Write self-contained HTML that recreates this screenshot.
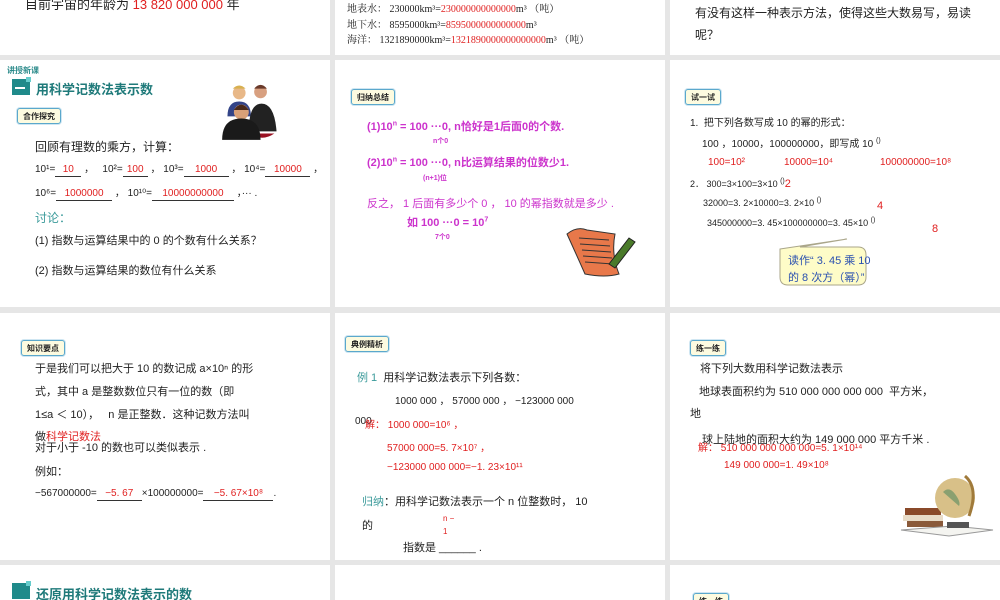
<!DOCTYPE html>
<html><head><meta charset="utf-8"><style>
*{margin:0;padding:0;box-sizing:border-box}
body{width:1000px;height:600px;background:#e6e6e6;position:relative;overflow:hidden;font-family:"Liberation Sans","Noto Sans CJK SC",sans-serif;color:#222}
.p{position:absolute;background:#fff;overflow:hidden}
.t{position:absolute;white-space:nowrap;font-size:12px}
.r{color:#e02020}
.m{color:#cc33cc;font-weight:bold}
.tl{color:#3a9a9a}
.b{position:absolute;border:1px solid #5ba8cc;border-radius:3px;background:#fdfbe0;font-size:8px;font-weight:bold;padding:1px 5px;height:16px;line-height:13px;box-shadow:0 0 0 1px #cfe6f2}
.u{display:inline-block;border-bottom:1px solid #333;text-align:center;line-height:12px}
sup{font-size:7px}
</style></head><body>
<!-- row1 -->
<div class="p" style="left:0;top:0;width:330px;height:55px">
<div class="t" style="left:25px;top:-6px;font-size:13px">目前宇宙的年龄为 <span class="r">13 820 000 000</span> 年</div></div>
<div class="p" style="left:335px;top:0;width:330px;height:55px">
<div class="t" style="left:12px;top:0;font-size:10px;font-family:'Liberation Serif','Noto Serif CJK SC',serif">地表水： 230000km³=<span class="r">230000000000000</span>m³ （吨）</div>
<div class="t" style="left:12px;top:16px;font-size:10px;font-family:'Liberation Serif','Noto Serif CJK SC',serif">地下水： 8595000km³=<span class="r">8595000000000000</span>m³</div>
<div class="t" style="left:12px;top:31px;font-size:10px;font-family:'Liberation Serif','Noto Serif CJK SC',serif">海洋： 1321890000km³=<span class="r">1321890000000000000</span>m³ （吨）</div></div>
<div class="p" style="left:670px;top:0;width:330px;height:55px">
<div class="t" style="left:25px;top:4px;font-size:12px">有没有这样一种表示方法，使得这些大数易写，易读</div>
<div class="t" style="left:25px;top:26px;font-size:12px">呢？</div></div>
<!-- row2 -->
<div class="p" style="left:0;top:60px;width:330px;height:247px">
<div class="t" style="left:7px;top:5px;font-size:8px;color:#2a8a8a;font-weight:bold">讲授新课</div>
<div style="position:absolute;left:12px;top:19px;width:18px;height:16px;background:#1f8a8a"></div>
<div style="position:absolute;left:15px;top:27px;width:10px;height:2px;background:#fff"></div>
<div style="position:absolute;left:26px;top:17px;width:5px;height:5px;background:#6cc"></div>
<div class="t" style="left:36px;top:19px;font-size:13px;font-weight:bold;color:#1f7a7a">用科学记数法表示数</div>
<div class="b" style="left:17px;top:48px">合作探究</div>
<svg style="position:absolute;left:214px;top:18px" width="76" height="64" viewBox="0 0 70 60">
<circle cx="23" cy="14" r="6" fill="#e8b888"/><path d="M17 10q6-6 12 0" fill="#d8b050"/>
<circle cx="43" cy="13" r="6" fill="#d8a080"/><path d="M37 10q6-7 12 0" fill="#6a3a2a"/>
<path d="M12 36q0-14 11-14t11 14z" fill="#334488"/>
<path d="M32 50q0-26 12-26t14 26z" fill="#222"/><path d="M34 52q10 8 22 0z" fill="#991122"/>
<circle cx="25" cy="32" r="7" fill="#d8a078"/><path d="M18 30q7-10 14 0" fill="#4a2a1a"/>
<path d="M7 58q0-20 18-20t18 20z" fill="#1a1a1a"/></svg>
<div class="t" style="left:35px;top:78px">回顾有理数的乘方，计算：</div>
<div class="t" style="left:35px;top:100px;font-size:10px">10¹=<span class="u r" style="width:26px">10</span> ，&nbsp;&nbsp; 10²=<span class="u r" style="width:25px">100</span> ， 10³=<span class="u r" style="width:45px">1000</span> ， 10⁴=<span class="u r" style="width:45px">10000</span> ，</div>
<div class="t" style="left:35px;top:124px;font-size:10px">10⁶=<span class="u r" style="width:56px">1000000</span> ， 10¹⁰=<span class="u r" style="width:82px">10000000000</span> ，··· .</div>
<div class="t tl" style="left:35px;top:149px">讨论：</div>
<div class="t" style="left:35px;top:172px;font-size:11px">(1) 指数与运算结果中的 0 的个数有什么关系？</div>
<div class="t" style="left:35px;top:202px;font-size:11px">(2) 指数与运算结果的数位有什么关系</div></div>
<div class="p" style="left:335px;top:60px;width:330px;height:247px">
<div class="b" style="left:16px;top:29px">归纳总结</div>
<div class="t m" style="left:32px;top:58px;font-size:11px">(1)10<sup>n</sup> = 100 ···0, n恰好是1后面0的个数.</div>
<div class="t m" style="left:98px;top:76px;font-size:7px">n个0</div>
<div class="t m" style="left:32px;top:94px;font-size:11px">(2)10<sup>n</sup> = 100 ···0, n比运算结果的位数少1.</div>
<div class="t m" style="left:88px;top:113px;font-size:7px">(n+1)位</div>
<div class="t" style="left:32px;top:135px;font-size:11px;color:#cc33cc">反之， 1 后面有多少个 0 ， 10 的幂指数就是多少 .</div>
<div class="t m" style="left:72px;top:154px;font-size:11px">如 100 ···0 = 10<sup>7</sup></div>
<div class="t m" style="left:100px;top:172px;font-size:7px">7个0</div>
<svg style="position:absolute;left:230px;top:160px" width="75" height="60" viewBox="0 0 75 60">
<path d="M2 14q10-8 20-4l28 4q-4 20 4 40q-14 4-34 0q-8-18-18-40z" fill="#e8784a" stroke="#333" stroke-width="1"/>
<g stroke="#333" stroke-width="1"><line x1="14" y1="18" x2="44" y2="20"/><line x1="15" y1="24" x2="45" y2="26"/><line x1="17" y1="30" x2="46" y2="32"/><line x1="18" y1="36" x2="47" y2="38"/><line x1="20" y1="42" x2="48" y2="44"/></g>
<path d="M44 44l20-26 6 4-20 26z" fill="#4a7a2a" stroke="#222"/></svg></div>
<div class="p" style="left:670px;top:60px;width:330px;height:247px">
<div class="b" style="left:15px;top:29px">试一试</div>
<div class="t" style="left:20px;top:54px;font-size:10px">1.&nbsp; 把下列各数写成 10 的幂的形式：</div>
<div class="t" style="left:32px;top:75px;font-size:10px">100 ，10000，100000000，即写成 10 <sup>()</sup></div>
<div class="t r" style="left:38px;top:97px;font-size:10px">100=10²</div>
<div class="t r" style="left:114px;top:97px;font-size:10px">10000=10⁴</div>
<div class="t r" style="left:210px;top:97px;font-size:10px">100000000=10⁸</div>
<div class="t" style="left:20px;top:117px;font-size:9px">2．&nbsp;300=3×100=3×10 <sup>()</sup><span class="r" style="font-size:11px">2</span></div>
<div class="t" style="left:33px;top:137px;font-size:9px">32000=3. 2×10000=3. 2×10 <sup>()</sup></div>
<div class="t r" style="left:207px;top:140px;font-size:11px">4</div>
<div class="t" style="left:37px;top:157px;font-size:9px">345000000=3. 45×100000000=3. 45×10 <sup>()</sup></div>
<div class="t r" style="left:262px;top:163px;font-size:11px">8</div>
<svg style="position:absolute;left:100px;top:175px" width="130" height="60"><path d="M10 14L77 4 30 12h58q8 0 8 8v22q0 8-8 8H18q-8 0-8-8z" fill="#fefcc8" stroke="#aaa68a"/></svg>
<div class="t" style="left:118px;top:193px;font-size:11px;color:#2a50b0;line-height:17px">读作“ 3. 45 乘 10<br>的 8 次方（幂）”</div></div>
<!-- row3 -->
<div class="p" style="left:0;top:313px;width:330px;height:247px">
<div class="b" style="left:21px;top:27px">知识要点</div>
<div class="t" style="left:35px;top:47px;font-size:11px">于是我们可以把大于 10 的数记成 a×10ⁿ 的形</div>
<div class="t" style="left:35px;top:70px;font-size:11px">式，其中 a 是整数数位只有一位的数（即</div>
<div class="t" style="left:35px;top:93px;font-size:11px">1≤a ＜ 10）， &nbsp; n 是正整数．这种记数方法叫</div>
<div class="t" style="left:35px;top:115px;font-size:11px">做<span class="r">科学记数法</span></div>
<div class="t" style="left:35px;top:126px;font-size:11px">对于小于 -10 的数也可以类似表示 .</div>
<div class="t" style="left:35px;top:150px;font-size:11px">例如：</div>
<div class="t" style="left:35px;top:175px;font-size:10px">−567000000=<span class="u r" style="width:45px">−5. 67</span>×100000000=<span class="u r" style="width:70px">−5. 67×10⁸</span>.</div></div>
<div class="p" style="left:335px;top:313px;width:330px;height:247px">
<div class="b" style="left:10px;top:23px">典例精析</div>
<div class="t" style="left:22px;top:56px;font-size:11px"><span class="tl">例 1</span>&nbsp; 用科学记数法表示下列各数：</div>
<div class="t" style="left:60px;top:79px;font-size:10px">1000 000 ， 57000 000 ， −123000 000</div>
<div class="t" style="left:20px;top:103px;font-size:10px">000</div>
<div class="t r" style="left:30px;top:103px;font-size:10px">解： 1000 000=10⁶ ，</div>
<div class="t r" style="left:52px;top:126px;font-size:10px">57000 000=5. 7×10⁷ ，</div>
<div class="t r" style="left:52px;top:149px;font-size:10px">−123000 000 000=−1. 23×10¹¹</div>
<div class="t" style="left:27px;top:180px;font-size:11px"><span class="tl">归纳</span>：用科学记数法表示一个 n 位整数时， 10</div>
<div class="t" style="left:27px;top:204px;font-size:11px">的</div>
<div class="t r" style="left:108px;top:199px;font-size:8px;line-height:13px">n −<br>1</div>
<div class="t" style="left:68px;top:226px;font-size:11px">指数是 ______ .</div></div>
<div class="p" style="left:670px;top:313px;width:330px;height:247px">
<div class="b" style="left:20px;top:27px">练一练</div>
<div class="t" style="left:30px;top:47px;font-size:11px">将下列大数用科学记数法表示</div>
<div class="t" style="left:29px;top:70px;font-size:11px">地球表面积约为 510 000 000 000 000 &nbsp;平方米，</div>
<div class="t" style="left:20px;top:92px;font-size:11px">地</div>
<div class="t" style="left:32px;top:118px;font-size:11px">球上陆地的面积大约为 149 000 000 平方千米 .</div>
<div class="t r" style="left:28px;top:126px;font-size:10px">解： 510 000 000 000 000=5. 1×10¹⁴</div>
<div class="t r" style="left:54px;top:147px;font-size:10px">149 000 000=1. 49×10⁸</div>
<svg style="position:absolute;left:225px;top:155px" width="100" height="80" viewBox="0 0 100 80">
<rect x="10" y="40" width="36" height="7" fill="#8a4a2a"/><rect x="8" y="47" width="40" height="6" fill="#e8dcc8"/><rect x="12" y="53" width="36" height="6" fill="#8a5a3a"/>
<path d="M6 62l52-4 40 4-44 6z" fill="#f4f4f0" stroke="#999"/>
<circle cx="60" cy="30" r="20" fill="#d8c088"/><path d="M48 24q6-6 12 2t4 12" fill="#8aa070"/>
<path d="M70 8q14 12 4 40" stroke="#a07a3a" stroke-width="3" fill="none"/><rect x="52" y="54" width="22" height="6" fill="#555"/></svg></div>
<!-- row4 -->
<div class="p" style="left:0;top:565px;width:330px;height:35px">
<div style="position:absolute;left:12px;top:18px;width:18px;height:16px;background:#1f8a8a"></div>
<div style="position:absolute;left:26px;top:16px;width:5px;height:5px;background:#6cc"></div>
<div class="t" style="left:36px;top:19px;font-size:13px;font-weight:bold;color:#1f7a7a">还原用科学记数法表示的数</div></div>
<div class="p" style="left:335px;top:565px;width:330px;height:35px"></div>
<div class="p" style="left:670px;top:565px;width:330px;height:35px">
<div class="b" style="left:23px;top:28px">练一练</div></div>
</body></html>
